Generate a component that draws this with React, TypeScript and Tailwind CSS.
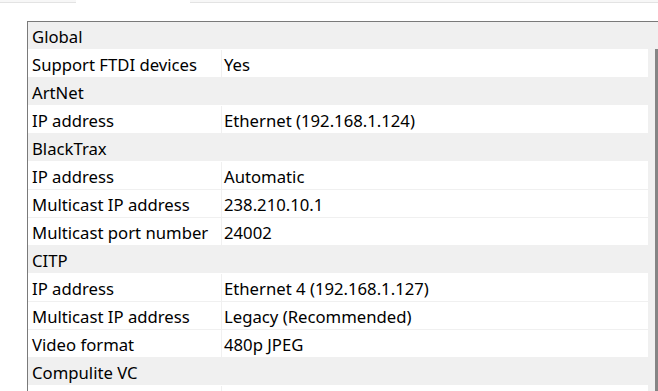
import React from "react"

type Row = { label: string; value?: string; group?: boolean }

const rows: Row[] = [
  { label: "Global", group: true },
  { label: "Support FTDI devices", value: "Yes" },
  { label: "ArtNet", group: true },
  { label: "IP address", value: "Ethernet (192.168.1.124)" },
  { label: "BlackTrax", group: true },
  { label: "IP address", value: "Automatic" },
  { label: "Multicast IP address", value: "238.210.10.1" },
  { label: "Multicast port number", value: "24002" },
  { label: "CITP", group: true },
  { label: "IP address", value: "Ethernet 4 (192.168.1.127)" },
  { label: "Multicast IP address", value: "Legacy (Recommended)" },
  { label: "Video format", value: "480p JPEG" },
  { label: "Compulite VC", group: true },
  { label: "", value: "" },
]

export default function App() {
  return (
    <div
      className="w-[658px] h-[391px] overflow-hidden bg-white text-black flex flex-col"
      style={{ fontFamily: '"Noto Sans", "Open Sans", sans-serif' }}
    >
      {/* tab strip */}
      <div className="flex h-[3px] shrink-0">
        <div className="w-[76px] bg-[#f7f7f7] border-b border-[#e3e3e3]" />
        <div className="w-[114px] bg-white" />
        <div className="flex-1 bg-[#f7f7f7] border-b border-[#e3e3e3]" />
      </div>

      <div className="flex flex-1 min-h-0 pt-[18px] pl-[27px]">
        <div className="flex flex-1 min-h-0 border-l border-t border-[#7a7a7a]">
          <div className="flex-1 min-w-0 overflow-hidden">
            {rows.map((r, i) =>
              r.group ? (
                <div
                  key={i}
                  className="h-[28px] bg-[#f0f0f0] flex items-center pl-[4px] pt-[3px] text-[16.7px] leading-none border-b border-white"
                >
                  {r.label}
                </div>
              ) : (
                <div key={i} className="h-[28px] flex border-b border-[#f0f0f0] text-[16.7px] leading-none">
                  <div className="w-[194px] shrink-0 flex items-center pl-[4px] pt-[3px] border-r border-[#f0f0f0]">
                    {r.label}
                  </div>
                  <div className="flex-1 flex items-center pl-[2px] pt-[3px]">{r.value}</div>
                </div>
              )
            )}
          </div>
          {/* scrollbar */}
          <div className="w-[10px] shrink-0 bg-[#f0f0f0] flex justify-end pt-[27px]">
            <div className="w-[3px] h-full bg-[#858585]" />
          </div>
        </div>
      </div>
    </div>
  )
}
